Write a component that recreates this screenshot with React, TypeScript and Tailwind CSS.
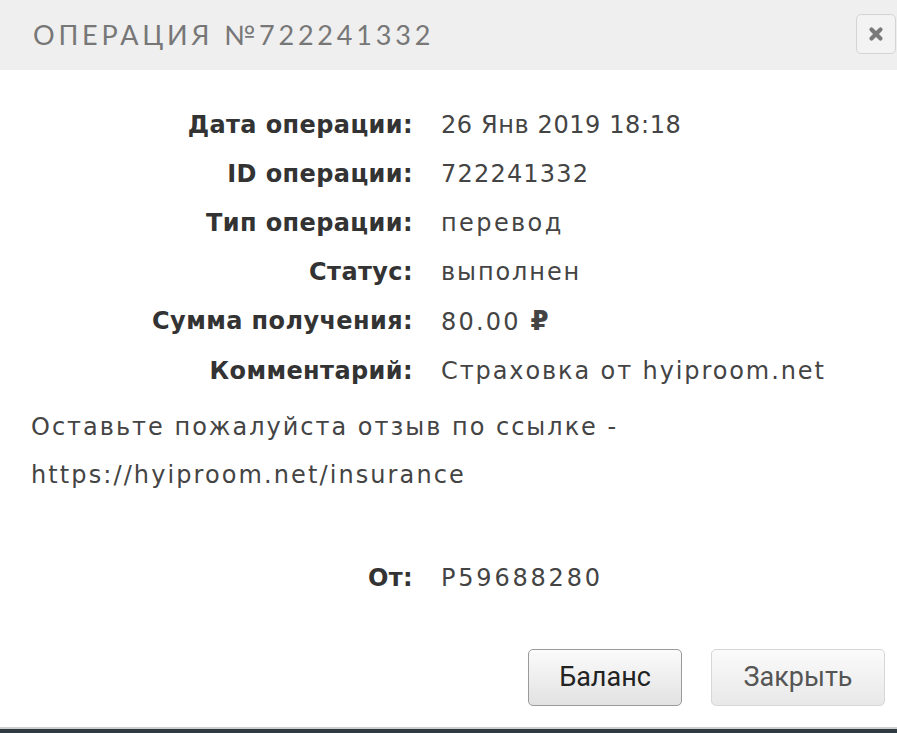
import React from "react";

const rows: [string, React.ReactNode, string][] = [
  ["Дата операции:", "26 Янв 2019 18:18", "tracking-[0.6px]"],
  ["ID операции:", "722241332", "tracking-[1.2px]"],
  ["Тип операции:", "перевод", "tracking-[2.4px]"],
  ["Статус:", "выполнен", "tracking-[1.9px]"],
  [
    "Сумма получения:",
    <span>
      80.00 <span className="font-bold text-[26px]">₽</span>
    </span>,
    "tracking-[2.2px]",
  ],
  ["Комментарий:", "Страховка от hyiproom.net", "tracking-[1.9px]"],
];

export default function App() {
  return (
    <div
      className="w-[897px] h-[733px] flex flex-col bg-white overflow-hidden"
      style={{ fontFamily: "'DejaVu Sans', sans-serif" }}
    >
      <div className="h-[70px] shrink-0 bg-[#efefef] flex items-center justify-between pl-[33px] pr-[1px]">
        <div
          className="text-[27px] tracking-[3.8px] text-[#777] font-normal"
          style={{ fontFamily: "Lato, sans-serif" }}
        >
          ОПЕРАЦИЯ №722241332
        </div>
        <button className="w-[40px] h-[40px] mt-[-2px] rounded-[5px] border border-[#d4d4d4] bg-[#f3f3f3] flex items-center justify-center">
          <svg width="16" height="16" viewBox="0 0 16 16">
            <path d="M3.5 3.5 L12.5 12.5 M12.5 3.5 L3.5 12.5" stroke="#7a7a7a" strokeWidth="4.2" strokeLinecap="round" />
          </svg>
        </button>
      </div>

      <div className="flex-1 flex flex-col pl-[31px] pr-[12px]">
        <div className="pt-[31px] grid grid-cols-[382px_1fr] gap-x-[28px] text-[24px] leading-[49px]">
          {rows.map(([l, v, t], i) => (
            <React.Fragment key={i}>
              <div className="text-right font-semibold text-[#333] tracking-[0.4px]">{l}</div>
              <div className={`text-[#444] ${t}`}>{v}</div>
            </React.Fragment>
          ))}
        </div>
        <div className="mt-[7px] text-[24px] leading-[48px] text-[#444]">
          <div className="tracking-[2px]">Оставьте пожалуйста отзыв по ссылке -</div>
          <div className="tracking-[2.1px]">https://hyiproom.net/insurance</div>
        </div>
        <div className="mt-[55px] grid grid-cols-[382px_1fr] gap-x-[28px] text-[24px] leading-[49px]">
          <div className="text-right font-semibold text-[#333] tracking-[0.4px]">От:</div>
          <div className="text-[#444] tracking-[2.8px]">P59688280</div>
        </div>
        <div className="mt-[46px] flex justify-end gap-[29px]" style={{ fontFamily: "Roboto, sans-serif" }}>
          <button className="w-[154px] h-[57px] rounded-[5px] border border-[#9a9a9a] bg-gradient-to-b from-[#fbfbfb] to-[#e2e2e2] text-[27px] text-[#222]">
            Баланс
          </button>
          <button className="w-[174px] h-[57px] rounded-[5px] border border-[#d6d6d6] bg-gradient-to-b from-[#fbfbfb] to-[#e8e8e8] text-[27px] text-[#555]">
            Закрыть
          </button>
        </div>
      </div>
      <div className="h-[2px] bg-[#cfcfcf] shrink-0" />
      <div className="h-[4px] bg-[#2f3b41] shrink-0" />
    </div>
  );
}
